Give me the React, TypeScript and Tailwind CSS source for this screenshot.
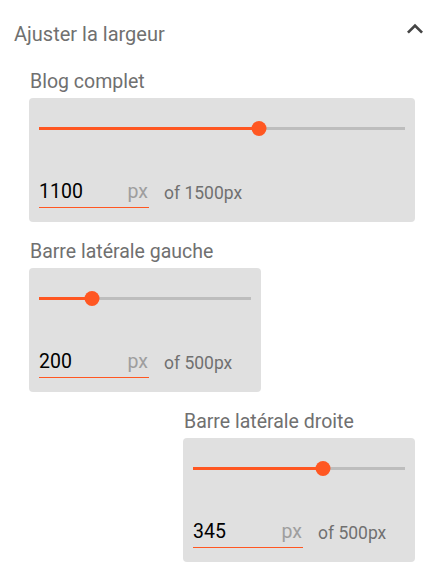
import React from 'react';

interface WidthCardProps {
  label: string;
  value: number;
  max: number;
  percent: number;
  wide?: boolean;
  alignRight?: boolean;
}

const WidthCard: React.FC<WidthCardProps> = ({ label, value, max, percent, wide, alignRight }) => {
  return (
    <div className={alignRight ? 'self-end' : ''}>
      <div className="h-[32px] pl-px pt-[4px] text-[19.5px] leading-[24px] text-[#707070]">{label}</div>
      <div className={`${wide ? 'w-[386px]' : 'w-[232px]'} h-[124px] rounded-[4px] bg-[#e0e0e0] px-[10px] pt-[29px]`}>
        {/* slider */}
        <div className="relative h-[3px] w-full bg-[#bdbdbd]">
          <div className="absolute left-0 top-0 h-[3px] bg-[#ff5722]" style={{ width: `${percent}%` }}></div>
          <div
            className="absolute top-[-6px] h-[15px] w-[15px] -translate-x-1/2 rounded-full bg-[#ff5722]"
            style={{ left: `${percent}%` }}
          ></div>
        </div>
        {/* input */}
        <div className="mt-[50px] flex items-end">
          <div className="flex w-[110px] items-center justify-between border-b border-[#ff5722] pb-[3px]">
            <span className="text-[19.5px] leading-[24px] text-black">{value}</span>
            <span className="pr-px text-[19.5px] leading-[24px] text-[#9e9e9e]">px</span>
          </div>
          <span className="ml-[15px] pb-[3px] text-[17.5px] leading-[24px] text-[#707070]">of {max}px</span>
        </div>
      </div>
    </div>
  );
};

export default function App() {
  return (
    <div className="h-[577px] w-[446px] bg-white" style={{ fontFamily: 'Roboto, "Noto Sans", sans-serif' }}>
      <div className="flex h-[47px] items-end justify-between pl-[14px] pr-[15px]">
        <span className="text-[20px] leading-[26px] text-[#707070]">Ajuster la largeur</span>
        <svg width="32" height="32" viewBox="0 0 24 24" className="relative -top-[2px] fill-[#444]">
          <path d="M12 8l-6 6 1.41 1.41L12 10.83l4.59 4.58L18 14z" />
        </svg>
      </div>
      <div className="flex w-[415px] flex-col gap-[14px] pl-[29px] pt-[19px]">
        <WidthCard label="Blog complet" value={1100} max={1500} percent={60} wide />
        <WidthCard label="Barre latérale gauche" value={200} max={500} percent={25} />
        <WidthCard label="Barre latérale droite" value={345} max={500} percent={61.25} alignRight />
      </div>
    </div>
  );
}
